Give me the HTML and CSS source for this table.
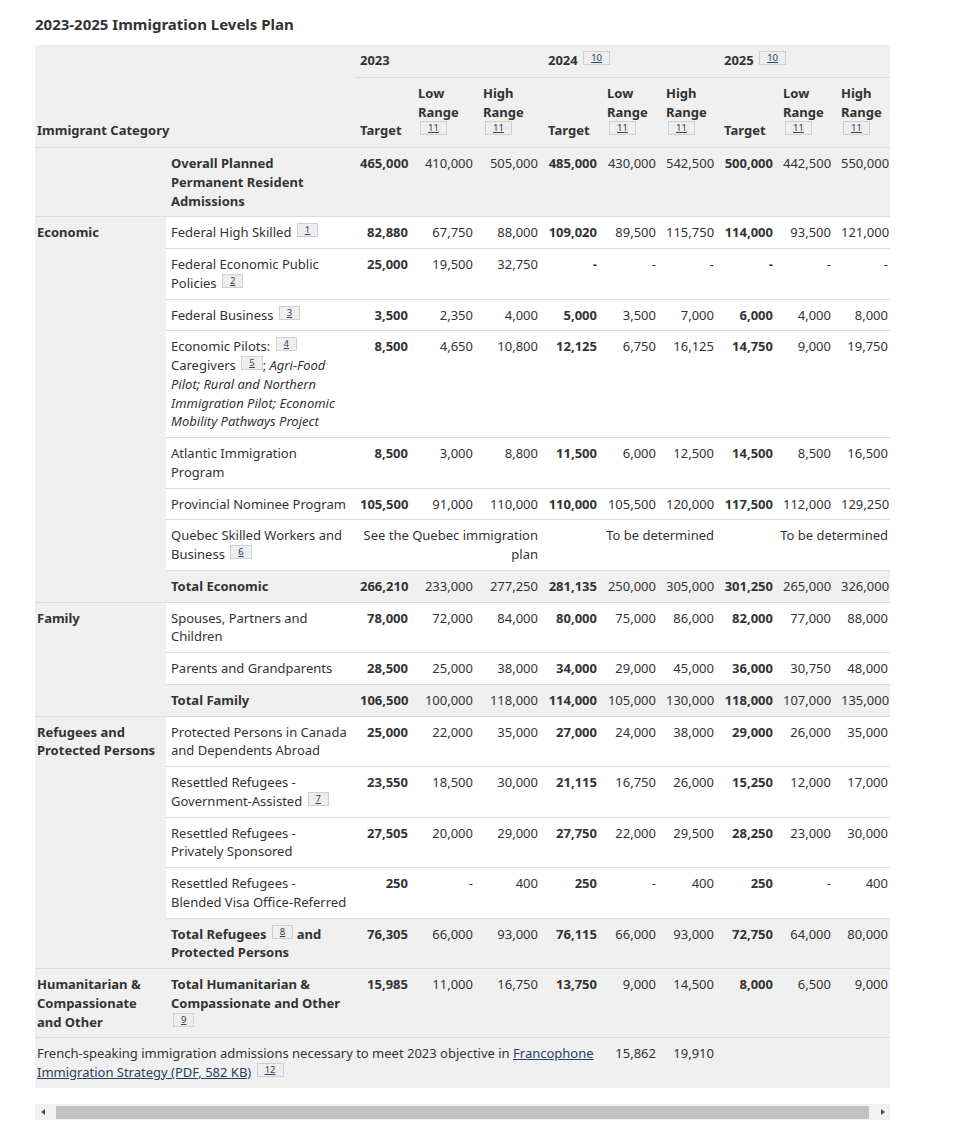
FILE: index.html
```html
<!DOCTYPE html>
<html lang="en">
<head>
<meta charset="utf-8">
<title>2023-2025 Immigration Levels Plan</title>
<link rel="stylesheet" href="styles.css">
</head>
<body>
<main class="page">
  <h2 class="title">2023-2025 Immigration Levels Plan</h2>
  <div class="scroll">
    <table class="plan">
      <colgroup>
        <col class="w-cat"><col class="w-sub">
        <col class="w-58"><col class="w-65"><col class="w-65">
        <col class="w-59"><col class="w-59"><col class="w-58">
        <col class="w-59"><col class="w-58"><col class="w-57">
      </colgroup>
      <thead>
        <tr>
          <th class="cat-head" colspan="2" rowspan="2">Immigrant Category</th>
          <th class="year" colspan="3">2023</th>
          <th class="year" colspan="3">2024 <sup class="fn"><a href="#fn10">10</a></sup></th>
          <th class="year" colspan="3">2025 <sup class="fn"><a href="#fn10">10</a></sup></th>
        </tr>
        <tr class="sub">
          <th>Target</th>
          <th>Low<br>Range<br><sup class="fn"><a href="#fn11">11</a></sup></th>
          <th>High<br>Range<br><sup class="fn"><a href="#fn11">11</a></sup></th>
          <th>Target</th>
          <th>Low<br>Range<br><sup class="fn"><a href="#fn11">11</a></sup></th>
          <th>High<br>Range<br><sup class="fn"><a href="#fn11">11</a></sup></th>
          <th>Target</th>
          <th>Low<br>Range<br><sup class="fn"><a href="#fn11">11</a></sup></th>
          <th>High<br>Range<br><sup class="fn"><a href="#fn11">11</a></sup></th>
        </tr>
      </thead>
      <tbody>
        <tr class="sum">
          <td class="cat"></td>
          <td class="b">Overall Planned<br>Permanent Resident<br>Admissions</td>
          <td class="n b">465,000</td><td class="n">410,000</td><td class="n">505,000</td>
          <td class="n b">485,000</td><td class="n">430,000</td><td class="n">542,500</td>
          <td class="n b">500,000</td><td class="n">442,500</td><td class="n">550,000</td>
        </tr>
        <tr>
          <th class="cat" rowspan="8">Economic</th>
          <td>Federal High Skilled <sup class="fn"><a href="#fn1">1</a></sup></td>
          <td class="n b">82,880</td><td class="n">67,750</td><td class="n">88,000</td>
          <td class="n b">109,020</td><td class="n">89,500</td><td class="n">115,750</td>
          <td class="n b">114,000</td><td class="n">93,500</td><td class="n">121,000</td>
        </tr>
        <tr>
          <td>Federal Economic Public Policies <sup class="fn"><a href="#fn2">2</a></sup></td>
          <td class="n b">25,000</td><td class="n">19,500</td><td class="n">32,750</td>
          <td class="n b">-</td><td class="n">-</td><td class="n">-</td>
          <td class="n b">-</td><td class="n">-</td><td class="n">-</td>
        </tr>
        <tr>
          <td>Federal Business <sup class="fn"><a href="#fn3">3</a></sup></td>
          <td class="n b">3,500</td><td class="n">2,350</td><td class="n">4,000</td>
          <td class="n b">5,000</td><td class="n">3,500</td><td class="n">7,000</td>
          <td class="n b">6,000</td><td class="n">4,000</td><td class="n">8,000</td>
        </tr>
        <tr>
          <td>Economic Pilots: <sup class="fn"><a href="#fn4">4</a></sup><br>Caregivers <sup class="fn"><a href="#fn5">5</a></sup>; <em>Agri-Food Pilot; Rural and Northern Immigration Pilot; Economic Mobility Pathways Project</em></td>
          <td class="n b">8,500</td><td class="n">4,650</td><td class="n">10,800</td>
          <td class="n b">12,125</td><td class="n">6,750</td><td class="n">16,125</td>
          <td class="n b">14,750</td><td class="n">9,000</td><td class="n">19,750</td>
        </tr>
        <tr>
          <td>Atlantic Immigration<br>Program</td>
          <td class="n b">8,500</td><td class="n">3,000</td><td class="n">8,800</td>
          <td class="n b">11,500</td><td class="n">6,000</td><td class="n">12,500</td>
          <td class="n b">14,500</td><td class="n">8,500</td><td class="n">16,500</td>
        </tr>
        <tr>
          <td>Provincial Nominee Program</td>
          <td class="n b">105,500</td><td class="n">91,000</td><td class="n">110,000</td>
          <td class="n b">110,000</td><td class="n">105,500</td><td class="n">120,000</td>
          <td class="n b">117,500</td><td class="n">112,000</td><td class="n">129,250</td>
        </tr>
        <tr>
          <td>Quebec Skilled Workers and Business <sup class="fn"><a href="#fn6">6</a></sup></td>
          <td class="n" colspan="3">See the Quebec immigration plan</td>
          <td class="n" colspan="3">To be determined</td>
          <td class="n" colspan="3">To be determined</td>
        </tr>
        <tr class="sum">
          <td class="b">Total Economic</td>
          <td class="n b">266,210</td><td class="n">233,000</td><td class="n">277,250</td>
          <td class="n b">281,135</td><td class="n">250,000</td><td class="n">305,000</td>
          <td class="n b">301,250</td><td class="n">265,000</td><td class="n">326,000</td>
        </tr>
        <tr>
          <th class="cat" rowspan="3">Family</th>
          <td>Spouses, Partners and Children</td>
          <td class="n b">78,000</td><td class="n">72,000</td><td class="n">84,000</td>
          <td class="n b">80,000</td><td class="n">75,000</td><td class="n">86,000</td>
          <td class="n b">82,000</td><td class="n">77,000</td><td class="n">88,000</td>
        </tr>
        <tr>
          <td>Parents and Grandparents</td>
          <td class="n b">28,500</td><td class="n">25,000</td><td class="n">38,000</td>
          <td class="n b">34,000</td><td class="n">29,000</td><td class="n">45,000</td>
          <td class="n b">36,000</td><td class="n">30,750</td><td class="n">48,000</td>
        </tr>
        <tr class="sum">
          <td class="b">Total Family</td>
          <td class="n b">106,500</td><td class="n">100,000</td><td class="n">118,000</td>
          <td class="n b">114,000</td><td class="n">105,000</td><td class="n">130,000</td>
          <td class="n b">118,000</td><td class="n">107,000</td><td class="n">135,000</td>
        </tr>
        <tr>
          <th class="cat" rowspan="5">Refugees and Protected Persons</th>
          <td>Protected Persons in Canada and Dependents Abroad</td>
          <td class="n b">25,000</td><td class="n">22,000</td><td class="n">35,000</td>
          <td class="n b">27,000</td><td class="n">24,000</td><td class="n">38,000</td>
          <td class="n b">29,000</td><td class="n">26,000</td><td class="n">35,000</td>
        </tr>
        <tr>
          <td>Resettled Refugees -<br>Government-Assisted <sup class="fn"><a href="#fn7">7</a></sup></td>
          <td class="n b">23,550</td><td class="n">18,500</td><td class="n">30,000</td>
          <td class="n b">21,115</td><td class="n">16,750</td><td class="n">26,000</td>
          <td class="n b">15,250</td><td class="n">12,000</td><td class="n">17,000</td>
        </tr>
        <tr>
          <td>Resettled Refugees -<br>Privately Sponsored</td>
          <td class="n b">27,505</td><td class="n">20,000</td><td class="n">29,000</td>
          <td class="n b">27,750</td><td class="n">22,000</td><td class="n">29,500</td>
          <td class="n b">28,250</td><td class="n">23,000</td><td class="n">30,000</td>
        </tr>
        <tr>
          <td>Resettled Refugees -<br>Blended Visa Office-Referred</td>
          <td class="n b">250</td><td class="n">-</td><td class="n">400</td>
          <td class="n b">250</td><td class="n">-</td><td class="n">400</td>
          <td class="n b">250</td><td class="n">-</td><td class="n">400</td>
        </tr>
        <tr class="sum">
          <td class="b">Total Refugees <sup class="fn"><a href="#fn8">8</a></sup> and<br>Protected Persons</td>
          <td class="n b">76,305</td><td class="n">66,000</td><td class="n">93,000</td>
          <td class="n b">76,115</td><td class="n">66,000</td><td class="n">93,000</td>
          <td class="n b">72,750</td><td class="n">64,000</td><td class="n">80,000</td>
        </tr>
        <tr class="sum">
          <th class="cat">Humanitarian &amp; Compassionate and Other</th>
          <td class="b">Total Humanitarian &amp;<br>Compassionate and Other<br><sup class="fn"><a href="#fn9">9</a></sup></td>
          <td class="n b">15,985</td><td class="n">11,000</td><td class="n">16,750</td>
          <td class="n b">13,750</td><td class="n">9,000</td><td class="n">14,500</td>
          <td class="n b">8,000</td><td class="n">6,500</td><td class="n">9,000</td>
        </tr>
        <tr class="sum">
          <td class="cat-text" colspan="6">French-speaking immigration admissions necessary to meet 2023 objective in <a class="lnk" href="#strategy">Francophone Immigration Strategy (PDF, 582 KB)</a> <sup class="fn"><a href="#fn12">12</a></sup></td>
          <td class="n">15,862</td><td class="n">19,910</td>
          <td></td><td></td><td></td>
        </tr>
      </tbody>
    </table>
  </div>
  <div class="hscroll" aria-hidden="true">
    <span class="arrow arrow-left"></span>
    <span class="thumb"></span>
    <span class="arrow arrow-right"></span>
  </div>
</main>
</body>
</html>
```

FILE: styles.css
```css
body {
  margin: 0;
  font-family: "Noto Sans", "Open Sans", sans-serif;
  color: #333;
  background: #fff;
}

.page {
  padding: 14px 0 0 35px;
  width: 855px;
}

.title {
  font-size: 15px;
  line-height: 20px;
  font-weight: 700;
  margin: 0 0 11px;
}

.scroll {
  width: 855px;
  overflow: hidden;
}

/* classic horizontal scrollbar look */
.hscroll {
  display: flex;
  align-items: stretch;
  height: 16px;
  background: #f1f1f1;
}

.arrow {
  flex: none;
  width: 15px;
  display: flex;
  align-items: center;
  justify-content: center;
}

.arrow::before {
  content: "";
  border-style: solid;
  border-color: transparent;
  border-width: 3.5px 4px;
}

.arrow-left::before {
  border-right-color: #505050;
  border-left-width: 0;
}

.arrow-right::before {
  border-left-color: #505050;
  border-right-width: 0;
}

.thumb {
  flex: 1;
  margin: 2px 6px 1px;
  background: #c1c1c1;
}

.plan {
  border-collapse: collapse;
  table-layout: fixed;
  width: 858px;
  font-size: 13px;
  line-height: 18.75px;
  margin-bottom: 16px;
}

.w-cat { width: 131px; }
.w-sub { width: 189px; }
.w-57 { width: 57px; }
.w-58 { width: 58px; }
.w-59 { width: 59px; }
.w-65 { width: 65px; }

.plan th,
.plan td {
  padding: 6px 5px;
  vertical-align: top;
  text-align: left;
  border-top: 1px solid #dcdcdc;
  background: #fff;
  font-weight: 400;
}

.plan thead th {
  background: #f0f0f0;
  font-weight: 700;
  vertical-align: bottom;
  padding-bottom: 7px;
}

.plan thead tr:first-child th {
  border-top: 0;
}

.plan thead .year {
  vertical-align: top;
}

.plan .cat-head {
  padding-left: 2px;
}

.plan .cat {
  background: #f0f0f0;
  font-weight: 700;
  padding-left: 2px;
}

.plan .cat-text {
  padding-left: 2px;
}

.plan .sum td {
  background: #f0f0f0;
}

.plan .n {
  text-align: right;
}

.plan .b {
  font-weight: 700;
}

.plan em {
  font-style: italic;
}

.fn {
  display: inline-block;
  font-size: 9.5px;
  line-height: 12px;
  font-weight: 400;
  padding: 0 7px;
  border: 1px solid #cfcfcf;
  background: #eee;
  vertical-align: 4px;
  margin-left: 2px;
}

.fn a {
  color: #284162;
  text-decoration: underline;
}

.lnk {
  color: #284162;
  text-decoration: underline;
}
```
